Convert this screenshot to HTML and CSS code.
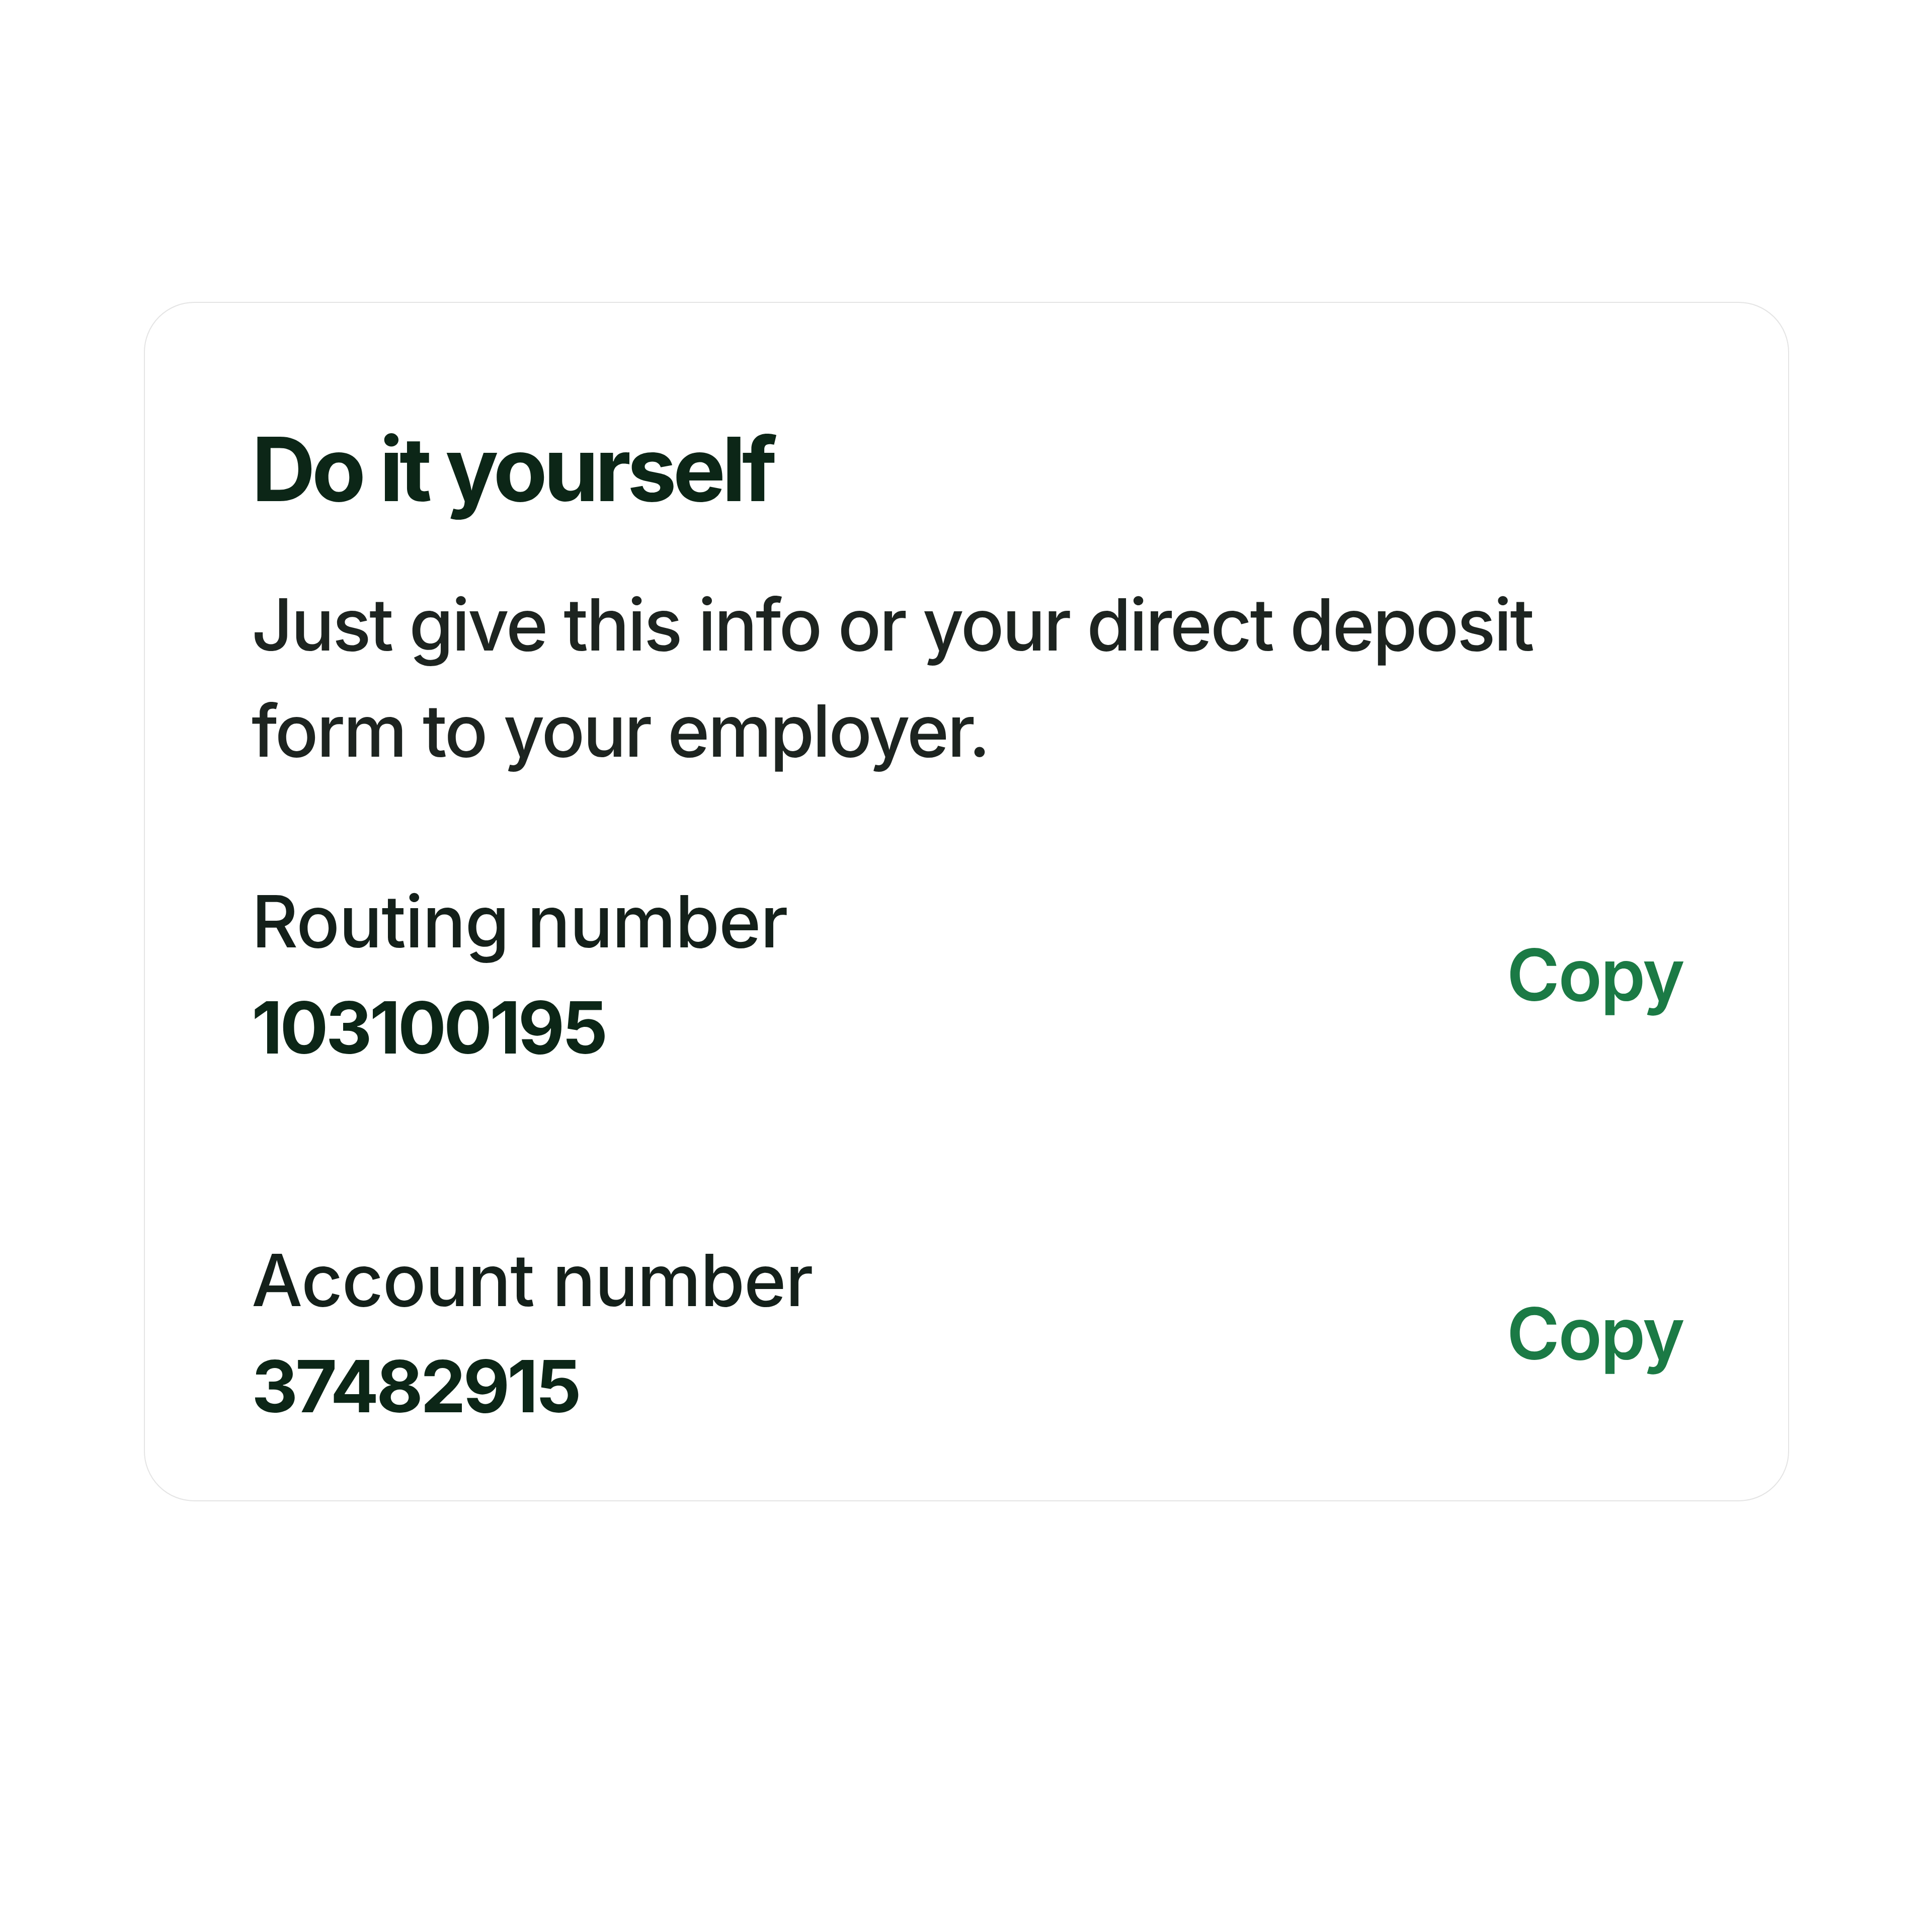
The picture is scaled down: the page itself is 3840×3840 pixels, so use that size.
FILE: index.html
```html
<!DOCTYPE html>
<html>
<head>
  <meta charset="utf-8" />
  <title>Do it yourself</title>
  <link rel="stylesheet" href="styles.css">
</head>
<body>
  <div class="page">
    <div class="card">
      <h2 class="card-title">Do it yourself</h2>
      <p class="card-text">Just give this info or your direct deposit form to your employer.</p>

      <div class="info-row">
        <div class="info">
          <div class="info-label">Routing number</div>
          <div class="info-value">103100195</div>
        </div>
        <a class="copy-link" href="#">Copy</a>
      </div>

      <div class="info-row">
        <div class="info">
          <div class="info-label">Account number</div>
          <div class="info-value">37482915</div>
        </div>
        <a class="copy-link" href="#">Copy</a>
      </div>
    </div>
  </div>
</body>
</html>
```

FILE: styles.css
```css
body {
  margin: 0;
  background-color: #fff;
  font-family: Inter, "Noto Sans", sans-serif;
  color: #1d2420;
}

.page {
  padding: 600px 0 0 286px;
}

.card {
  width: 3270px;
  box-sizing: border-box;
  padding: 224px 208px 122px 212px;
  border: 2px solid #e4e4e4;
  border-radius: 100px;
  background-color: #fff;
}

.card-title {
  margin: 0;
  font-size: 176px;
  line-height: 211px;
  font-weight: 700;
  letter-spacing: -7.6px;
  color: #0c2617;
}

.card-text {
  margin: 98px 0 0 0;
  max-width: 2700px;
  font-size: 143px;
  line-height: 211px;
  font-weight: 500;
  letter-spacing: -3.8px;
}

.info-row {
  display: flex;
  justify-content: space-between;
  align-items: center;
  margin-top: 168px;
}

.info-row + .info-row {
  margin-top: 291px;
}

.info-label {
  font-size: 143px;
  line-height: 211px;
  font-weight: 500;
  letter-spacing: -1.6px;
  color: #14201a;
}

.info-value {
  font-size: 143px;
  line-height: 211px;
  font-weight: 700;
  letter-spacing: -5.3px;
  color: #0c2617;
}

.copy-link {
  font-size: 143px;
  line-height: 211px;
  font-weight: 600;
  letter-spacing: -3px;
  color: #1b7a45;
  text-decoration: none;
}
```
